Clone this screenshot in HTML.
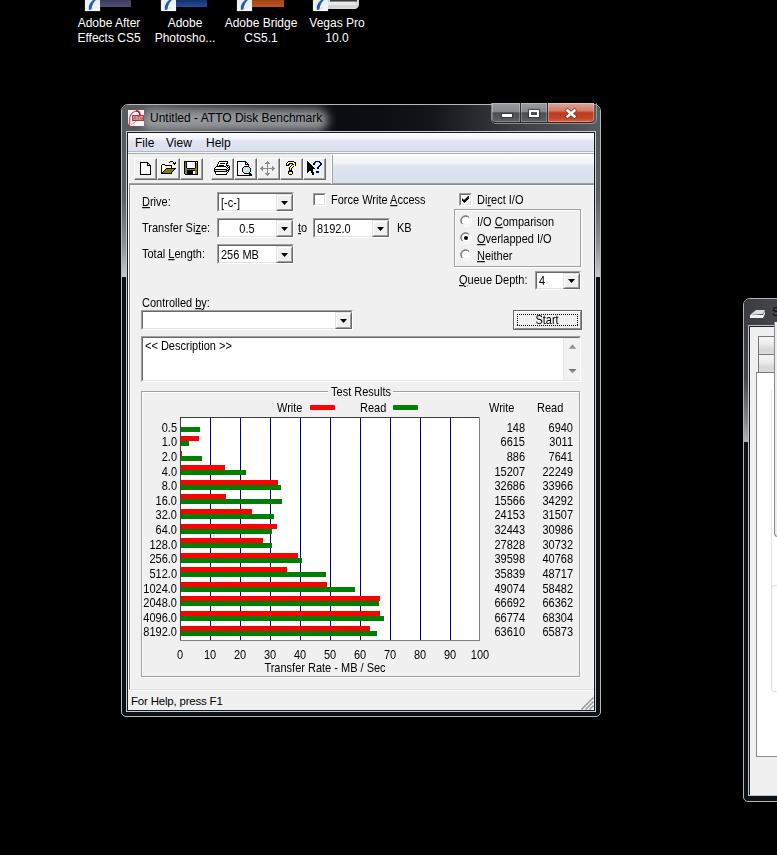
<!DOCTYPE html><html><head><meta charset="utf-8"><style>
html,body{margin:0;padding:0;background:#000;}
body{width:777px;height:855px;position:relative;overflow:hidden;font-family:"Liberation Sans", sans-serif;}
div{box-sizing:content-box}
</style></head><body>
<div style="position:absolute;left:85px;top:0;width:15px;height:11px;background:linear-gradient(180deg,#e4eef2,#f6f8f4);box-shadow:0 0 1px rgba(255,255,255,0.5)"></div>
<svg style="position:absolute;left:85px;top:0" width="15" height="11"><path d="M4 10C3 6 5 2 9.5 -1L12 -1C8.5 2 7 5 6.5 9.5z" fill="#2a5aa8"/><path d="M6.5 9.5C7.5 8 9 7.5 10.5 8" stroke="#c8d8e8" stroke-width="0.8" fill="none"/></svg>
<div style="position:absolute;left:100px;top:0px;width:31px;height:7px;background:linear-gradient(180deg,#3c3c5c,#50507a)"></div>
<div style="position:absolute;left:161px;top:0;width:15px;height:11px;background:linear-gradient(180deg,#e4eef2,#f6f8f4);box-shadow:0 0 1px rgba(255,255,255,0.5)"></div>
<svg style="position:absolute;left:161px;top:0" width="15" height="11"><path d="M4 10C3 6 5 2 9.5 -1L12 -1C8.5 2 7 5 6.5 9.5z" fill="#2a5aa8"/><path d="M6.5 9.5C7.5 8 9 7.5 10.5 8" stroke="#c8d8e8" stroke-width="0.8" fill="none"/></svg>
<div style="position:absolute;left:176px;top:0px;width:31px;height:7px;background:linear-gradient(180deg,#15306a,#2050a0)"></div>
<div style="position:absolute;left:237px;top:0;width:15px;height:11px;background:linear-gradient(180deg,#e4eef2,#f6f8f4);box-shadow:0 0 1px rgba(255,255,255,0.5)"></div>
<svg style="position:absolute;left:237px;top:0" width="15" height="11"><path d="M4 10C3 6 5 2 9.5 -1L12 -1C8.5 2 7 5 6.5 9.5z" fill="#2a5aa8"/><path d="M6.5 9.5C7.5 8 9 7.5 10.5 8" stroke="#c8d8e8" stroke-width="0.8" fill="none"/></svg>
<div style="position:absolute;left:252px;top:0px;width:32px;height:7px;background:linear-gradient(180deg,#a04418,#c0561e)"></div>
<div style="position:absolute;left:313px;top:0;width:15px;height:11px;background:linear-gradient(180deg,#e4eef2,#f6f8f4);box-shadow:0 0 1px rgba(255,255,255,0.5)"></div>
<svg style="position:absolute;left:313px;top:0" width="15" height="11"><path d="M4 10C3 6 5 2 9.5 -1L12 -1C8.5 2 7 5 6.5 9.5z" fill="#2a5aa8"/><path d="M6.5 9.5C7.5 8 9 7.5 10.5 8" stroke="#c8d8e8" stroke-width="0.8" fill="none"/></svg>
<svg style="position:absolute;left:328px;top:0" width="32" height="10"><path d="M0 0H31V4C31 7.5 29 9 26 9H0z" fill="#d4d4d4"/><path d="M0 2H26C27.5 2 28 3 28 4V5H0z" fill="#e8e8e8"/><path d="M2 0H29V1.5H2z" fill="#3a3a3a"/></svg>
<div style="position:absolute;top:16.84px;line-height:12px;font-size:12px;color:#fff;white-space:pre;font-family:'Liberation Sans', sans-serif;text-shadow:0 1px 2px rgba(0,0,0,0.9);left:-91px;width:400px;text-align:center">Adobe After</div>
<div style="position:absolute;top:31.84px;line-height:12px;font-size:12px;color:#fff;white-space:pre;font-family:'Liberation Sans', sans-serif;text-shadow:0 1px 2px rgba(0,0,0,0.9);left:-91px;width:400px;text-align:center">Effects CS5</div>
<div style="position:absolute;top:16.84px;line-height:12px;font-size:12px;color:#fff;white-space:pre;font-family:'Liberation Sans', sans-serif;text-shadow:0 1px 2px rgba(0,0,0,0.9);left:-15px;width:400px;text-align:center">Adobe</div>
<div style="position:absolute;top:31.84px;line-height:12px;font-size:12px;color:#fff;white-space:pre;font-family:'Liberation Sans', sans-serif;text-shadow:0 1px 2px rgba(0,0,0,0.9);left:-15px;width:400px;text-align:center">Photosho...</div>
<div style="position:absolute;top:16.84px;line-height:12px;font-size:12px;color:#fff;white-space:pre;font-family:'Liberation Sans', sans-serif;text-shadow:0 1px 2px rgba(0,0,0,0.9);left:61px;width:400px;text-align:center">Adobe Bridge</div>
<div style="position:absolute;top:31.84px;line-height:12px;font-size:12px;color:#fff;white-space:pre;font-family:'Liberation Sans', sans-serif;text-shadow:0 1px 2px rgba(0,0,0,0.9);left:61px;width:400px;text-align:center">CS5.1</div>
<div style="position:absolute;top:16.84px;line-height:12px;font-size:12px;color:#fff;white-space:pre;font-family:'Liberation Sans', sans-serif;text-shadow:0 1px 2px rgba(0,0,0,0.9);left:137px;width:400px;text-align:center">Vegas Pro</div>
<div style="position:absolute;top:31.84px;line-height:12px;font-size:12px;color:#fff;white-space:pre;font-family:'Liberation Sans', sans-serif;text-shadow:0 1px 2px rgba(0,0,0,0.9);left:137px;width:400px;text-align:center">10.0</div>
<div style="position:absolute;left:121px;top:104px;width:478px;height:611px;border:1px solid #b4b8bc;border-radius:7px 7px 5px 5px;background:#0e1114;overflow:hidden">
<div style="position:absolute;left:0;top:0;width:478px;height:28px;background:linear-gradient(90deg,#5a5d60 0px,#55585b 20px,#3a3d40 60px,#15181c 180px,#0a0d12 215px,#0b0e13 260px,#121519 310px,#2a2d31 360px,#3e4145 400px,#505357 460px,#585b5f 478px)"></div>
<div style="position:absolute;left:20px;top:4px;width:186px;height:22px;border-radius:11px;background:rgba(160,163,166,0.9);filter:blur(5px)"></div>
<div style="position:absolute;left:0;top:28px;width:5px;height:144px;background:linear-gradient(180deg,#56595c 0%,#5c5f62 45%,#8e9194 78%,#bcbfc1 96%,#c6c8ca 100%)"></div>
<div style="position:absolute;right:0;top:28px;width:5px;height:144px;background:linear-gradient(180deg,#56595c 0%,#5c5f62 45%,#8e9194 78%,#bcbfc1 96%,#c6c8ca 100%)"></div>
</div>
<svg style="position:absolute;left:128px;top:110px" width="16" height="16"><rect x="0" y="0" width="16" height="16" fill="#fbf2f2"/><path d="M11.5 5C12 1.5 9 0.5 6.5 1.5C3 3 1.5 7 1.5 10.5C1.5 13 2 14.5 1 15.5" stroke="#d0506a" stroke-width="1.3" fill="none"/><path d="M8 1C10.5 0.5 12 2 11.8 5" stroke="#a01830" stroke-width="1.5" fill="none"/><path d="M0 13C0.5 15 1.5 16 3.5 16H0z" fill="#b02038"/><path d="M3 14.5C5 14 7 12.5 8 11" stroke="#e08090" stroke-width="0.9" fill="none"/><rect x="4" y="5" width="12" height="6" fill="#b83848"/><rect x="5" y="6" width="10" height="4" fill="#c9a294"/><path d="M6 9.5L7 6.5 8 9.5M9 6.5h3M10.5 6.5v3M12.5 7.5a1 1 0 1 0 2 0v1a1 1 0 1 1-2 0z" stroke="#9a5050" stroke-width="0.6" fill="none"/></svg>
<div style="position:absolute;top:111.84px;line-height:12px;font-size:12px;color:#000;white-space:pre;font-family:'Liberation Sans', sans-serif;;left:150px">Untitled - ATTO Disk Benchmark</div>
<div style="position:absolute;left:491px;top:103px;width:104px;height:20px;border:1px solid rgba(200,204,208,0.55);border-top:none;border-radius:0 0 5px 5px"></div>
<div style="position:absolute;left:492px;top:103px;width:28px;height:19px;border-right:1px solid #2a2d30;border-bottom:1px solid #2a2d30;border-radius:0 0 0 4px;background:linear-gradient(180deg,#9a9ea3 0%,#84888d 45%,#4a4e53 52%,#5e6267 100%);box-shadow:inset 0 0 0 1px rgba(255,255,255,0.25)"></div>
<div style="position:absolute;left:521px;top:103px;width:26px;height:19px;border-right:1px solid #2a2d30;border-bottom:1px solid #2a2d30;background:linear-gradient(180deg,#9a9ea3 0%,#84888d 45%,#4a4e53 52%,#5e6267 100%);box-shadow:inset 0 0 0 1px rgba(255,255,255,0.25)"></div>
<div style="position:absolute;left:548px;top:103px;width:46px;height:19px;border-bottom:1px solid #4a1a10;border-radius:0 0 4px 0;background:linear-gradient(180deg,#dba79a 0%,#cf7e6a 40%,#bd3a1e 52%,#c44428 80%,#d2664a 100%);box-shadow:inset 0 0 0 1px rgba(255,255,255,0.3)"></div>
<div style="position:absolute;left:502px;top:114px;width:10px;height:3px;background:#fff;box-shadow:0 0 1px 1px rgba(40,40,40,0.6)"></div>
<div style="position:absolute;left:529px;top:110px;width:6px;height:3px;border:2px solid #fff;border-top-width:2px;box-shadow:0 0 1px 1px rgba(40,40,40,0.6), inset 0 0 1px rgba(40,40,40,0.6)"></div>
<svg style="position:absolute;left:563px;top:107px" width="16" height="13"><path d="M4.5 3.5L11.5 9.5M11.5 3.5L4.5 9.5" stroke="#5a1a10" stroke-width="4.2" stroke-opacity="0.55" stroke-linecap="square"/><path d="M4.5 3.5L11.5 9.5M11.5 3.5L4.5 9.5" stroke="#fff" stroke-width="2.6" stroke-linecap="square"/></svg>
<div style="position:absolute;left:126px;top:131px;width:468px;height:579px;border:1px solid #c9ccd0;"></div>
<div style="position:absolute;left:127px;top:132px;width:466px;height:577px;border:1px solid #16191d;"></div>
<div style="position:absolute;left:128px;top:133px;width:466px;height:577px;background:#f0f0f0"></div>
<div style="position:absolute;left:128px;top:133px;width:466px;height:18px;background:linear-gradient(180deg,#fbfcfe 0%,#f1f3f8 30%,#dfe4f0 45%,#dae0ee 100%)"></div>
<div style="position:absolute;left:128px;top:151px;width:466px;height:1px;background:#b4b9c4"></div>
<div style="position:absolute;left:128px;top:152px;width:466px;height:1px;background:#f6f7fb"></div>
<div style="position:absolute;left:128px;top:153px;width:466px;height:1px;background:#a8aca8"></div>
<div style="position:absolute;top:136.84px;line-height:12px;font-size:12px;color:#000;white-space:pre;font-family:'Liberation Sans', sans-serif;;left:135px">File</div>
<div style="position:absolute;top:136.84px;line-height:12px;font-size:12px;color:#000;white-space:pre;font-family:'Liberation Sans', sans-serif;;left:166px">View</div>
<div style="position:absolute;top:136.84px;line-height:12px;font-size:12px;color:#000;white-space:pre;font-family:'Liberation Sans', sans-serif;;left:206px">Help</div>
<div style="position:absolute;left:128px;top:154px;width:466px;height:29px;background:linear-gradient(180deg,#fbfcfe 0%,#f1f3f8 30%,#dfe4f0 42%,#d8dfee 100%)"></div>
<div style="position:absolute;left:128px;top:183px;width:466px;height:1px;background:#a0a0a0"></div>
<div style="position:absolute;left:128px;top:154px;width:204px;height:29px;background:#f0f0f0"></div>
<div style="position:absolute;left:134px;top:158px;width:21px;height:20px;border-style:solid;border-width:1px;border-color:#fff #696969 #696969 #fff;box-shadow:inset -1px -1px 0 #a0a0a0;background:#f0f0f0"></div>
<svg style="position:absolute;left:136px;top:161px" width="18" height="14" shape-rendering="crispEdges"><rect x="4" y="1" width="8" height="1" fill="#000000"/><rect x="4" y="2" width="1" height="1" fill="#000000"/><rect x="5" y="2" width="6" height="1" fill="#ffffff"/><rect x="11" y="2" width="2" height="1" fill="#000000"/><rect x="4" y="3" width="1" height="1" fill="#000000"/><rect x="5" y="3" width="6" height="1" fill="#ffffff"/><rect x="11" y="3" width="1" height="1" fill="#000000"/><rect x="12" y="3" width="1" height="1" fill="#ffffff"/><rect x="13" y="3" width="1" height="1" fill="#000000"/><rect x="4" y="4" width="1" height="1" fill="#000000"/><rect x="5" y="4" width="6" height="1" fill="#ffffff"/><rect x="11" y="4" width="4" height="1" fill="#000000"/><rect x="4" y="5" width="1" height="1" fill="#000000"/><rect x="5" y="5" width="9" height="1" fill="#ffffff"/><rect x="14" y="5" width="1" height="1" fill="#000000"/><rect x="4" y="6" width="1" height="1" fill="#000000"/><rect x="5" y="6" width="9" height="1" fill="#ffffff"/><rect x="14" y="6" width="1" height="1" fill="#000000"/><rect x="4" y="7" width="1" height="1" fill="#000000"/><rect x="5" y="7" width="9" height="1" fill="#ffffff"/><rect x="14" y="7" width="1" height="1" fill="#000000"/><rect x="4" y="8" width="1" height="1" fill="#000000"/><rect x="5" y="8" width="9" height="1" fill="#ffffff"/><rect x="14" y="8" width="1" height="1" fill="#000000"/><rect x="4" y="9" width="1" height="1" fill="#000000"/><rect x="5" y="9" width="9" height="1" fill="#ffffff"/><rect x="14" y="9" width="1" height="1" fill="#000000"/><rect x="4" y="10" width="1" height="1" fill="#000000"/><rect x="5" y="10" width="9" height="1" fill="#ffffff"/><rect x="14" y="10" width="1" height="1" fill="#000000"/><rect x="4" y="11" width="1" height="1" fill="#000000"/><rect x="5" y="11" width="9" height="1" fill="#ffffff"/><rect x="14" y="11" width="1" height="1" fill="#000000"/><rect x="4" y="12" width="1" height="1" fill="#000000"/><rect x="5" y="12" width="9" height="1" fill="#ffffff"/><rect x="14" y="12" width="1" height="1" fill="#000000"/><rect x="4" y="13" width="11" height="1" fill="#000000"/></svg>
<div style="position:absolute;left:157px;top:158px;width:21px;height:20px;border-style:solid;border-width:1px;border-color:#fff #696969 #696969 #fff;box-shadow:inset -1px -1px 0 #a0a0a0;background:#f0f0f0"></div>
<svg style="position:absolute;left:159px;top:161px" width="18" height="13" shape-rendering="crispEdges"><rect x="11" y="0" width="3" height="1" fill="#000000"/><rect x="10" y="1" width="1" height="1" fill="#000000"/><rect x="14" y="1" width="1" height="1" fill="#000000"/><rect x="16" y="1" width="1" height="1" fill="#000000"/><rect x="14" y="2" width="3" height="1" fill="#000000"/><rect x="3" y="3" width="3" height="1" fill="#000000"/><rect x="15" y="3" width="1" height="1" fill="#000000"/><rect x="2" y="4" width="1" height="1" fill="#000000"/><rect x="3" y="4" width="3" height="1" fill="#ffff80"/><rect x="6" y="4" width="7" height="1" fill="#000000"/><rect x="2" y="5" width="1" height="1" fill="#000000"/><rect x="3" y="5" width="1" height="1" fill="#ffff80"/><rect x="4" y="5" width="1" height="1" fill="#ffffff"/><rect x="5" y="5" width="1" height="1" fill="#ffff80"/><rect x="6" y="5" width="1" height="1" fill="#ffffff"/><rect x="7" y="5" width="1" height="1" fill="#ffff80"/><rect x="8" y="5" width="1" height="1" fill="#ffffff"/><rect x="9" y="5" width="1" height="1" fill="#ffff80"/><rect x="10" y="5" width="1" height="1" fill="#ffffff"/><rect x="11" y="5" width="1" height="1" fill="#ffff80"/><rect x="12" y="5" width="1" height="1" fill="#000000"/><rect x="2" y="6" width="1" height="1" fill="#000000"/><rect x="3" y="6" width="1" height="1" fill="#ffffff"/><rect x="4" y="6" width="1" height="1" fill="#ffff80"/><rect x="5" y="6" width="1" height="1" fill="#ffffff"/><rect x="6" y="6" width="1" height="1" fill="#ffff80"/><rect x="7" y="6" width="1" height="1" fill="#ffffff"/><rect x="8" y="6" width="1" height="1" fill="#ffff80"/><rect x="9" y="6" width="1" height="1" fill="#ffffff"/><rect x="10" y="6" width="1" height="1" fill="#ffff80"/><rect x="11" y="6" width="1" height="1" fill="#ffffff"/><rect x="12" y="6" width="1" height="1" fill="#000000"/><rect x="2" y="7" width="1" height="1" fill="#000000"/><rect x="3" y="7" width="1" height="1" fill="#ffff80"/><rect x="4" y="7" width="1" height="1" fill="#ffffff"/><rect x="5" y="7" width="1" height="1" fill="#ffff80"/><rect x="6" y="7" width="1" height="1" fill="#ffffff"/><rect x="7" y="7" width="10" height="1" fill="#000000"/><rect x="2" y="8" width="1" height="1" fill="#000000"/><rect x="3" y="8" width="1" height="1" fill="#ffffff"/><rect x="4" y="8" width="1" height="1" fill="#ffff80"/><rect x="5" y="8" width="1" height="1" fill="#ffffff"/><rect x="6" y="8" width="1" height="1" fill="#000000"/><rect x="7" y="8" width="8" height="1" fill="#808000"/><rect x="15" y="8" width="1" height="1" fill="#000000"/><rect x="2" y="9" width="1" height="1" fill="#000000"/><rect x="3" y="9" width="1" height="1" fill="#ffff80"/><rect x="4" y="9" width="1" height="1" fill="#ffffff"/><rect x="5" y="9" width="1" height="1" fill="#000000"/><rect x="6" y="9" width="8" height="1" fill="#808000"/><rect x="14" y="9" width="1" height="1" fill="#000000"/><rect x="2" y="10" width="1" height="1" fill="#000000"/><rect x="3" y="10" width="1" height="1" fill="#ffffff"/><rect x="4" y="10" width="1" height="1" fill="#000000"/><rect x="5" y="10" width="8" height="1" fill="#808000"/><rect x="13" y="10" width="1" height="1" fill="#000000"/><rect x="2" y="11" width="2" height="1" fill="#000000"/><rect x="4" y="11" width="8" height="1" fill="#808000"/><rect x="12" y="11" width="1" height="1" fill="#000000"/><rect x="2" y="12" width="11" height="1" fill="#000000"/></svg>
<div style="position:absolute;left:180px;top:158px;width:21px;height:20px;border-style:solid;border-width:1px;border-color:#fff #696969 #696969 #fff;box-shadow:inset -1px -1px 0 #a0a0a0;background:#f0f0f0"></div>
<svg style="position:absolute;left:182px;top:161px" width="18" height="14" shape-rendering="crispEdges"><rect x="2" y="0" width="14" height="1" fill="#000000"/><rect x="2" y="1" width="1" height="1" fill="#000000"/><rect x="3" y="1" width="1" height="1" fill="#808000"/><rect x="4" y="1" width="1" height="1" fill="#000000"/><rect x="5" y="1" width="8" height="1" fill="#ffffff"/><rect x="13" y="1" width="1" height="1" fill="#000000"/><rect x="14" y="1" width="1" height="1" fill="#ffffff"/><rect x="15" y="1" width="1" height="1" fill="#000000"/><rect x="2" y="2" width="1" height="1" fill="#000000"/><rect x="3" y="2" width="1" height="1" fill="#808000"/><rect x="4" y="2" width="1" height="1" fill="#000000"/><rect x="5" y="2" width="8" height="1" fill="#ffffff"/><rect x="13" y="2" width="1" height="1" fill="#000000"/><rect x="14" y="2" width="1" height="1" fill="#808000"/><rect x="15" y="2" width="1" height="1" fill="#000000"/><rect x="2" y="3" width="1" height="1" fill="#000000"/><rect x="3" y="3" width="1" height="1" fill="#808000"/><rect x="4" y="3" width="1" height="1" fill="#000000"/><rect x="5" y="3" width="8" height="1" fill="#ffffff"/><rect x="13" y="3" width="1" height="1" fill="#000000"/><rect x="14" y="3" width="1" height="1" fill="#808000"/><rect x="15" y="3" width="1" height="1" fill="#000000"/><rect x="2" y="4" width="1" height="1" fill="#000000"/><rect x="3" y="4" width="1" height="1" fill="#808000"/><rect x="4" y="4" width="1" height="1" fill="#000000"/><rect x="5" y="4" width="8" height="1" fill="#ffffff"/><rect x="13" y="4" width="1" height="1" fill="#000000"/><rect x="14" y="4" width="1" height="1" fill="#808000"/><rect x="15" y="4" width="1" height="1" fill="#000000"/><rect x="2" y="5" width="1" height="1" fill="#000000"/><rect x="3" y="5" width="1" height="1" fill="#808000"/><rect x="4" y="5" width="1" height="1" fill="#000000"/><rect x="5" y="5" width="8" height="1" fill="#ffffff"/><rect x="13" y="5" width="1" height="1" fill="#000000"/><rect x="14" y="5" width="1" height="1" fill="#808000"/><rect x="15" y="5" width="1" height="1" fill="#000000"/><rect x="2" y="6" width="1" height="1" fill="#000000"/><rect x="3" y="6" width="1" height="1" fill="#808000"/><rect x="4" y="6" width="1" height="1" fill="#000000"/><rect x="5" y="6" width="8" height="1" fill="#ffffff"/><rect x="13" y="6" width="1" height="1" fill="#000000"/><rect x="14" y="6" width="1" height="1" fill="#808000"/><rect x="15" y="6" width="1" height="1" fill="#000000"/><rect x="2" y="7" width="1" height="1" fill="#000000"/><rect x="3" y="7" width="2" height="1" fill="#808000"/><rect x="5" y="7" width="8" height="1" fill="#000000"/><rect x="13" y="7" width="2" height="1" fill="#808000"/><rect x="15" y="7" width="1" height="1" fill="#000000"/><rect x="2" y="8" width="1" height="1" fill="#000000"/><rect x="3" y="8" width="12" height="1" fill="#808000"/><rect x="15" y="8" width="1" height="1" fill="#000000"/><rect x="2" y="9" width="1" height="1" fill="#000000"/><rect x="3" y="9" width="2" height="1" fill="#808000"/><rect x="5" y="9" width="8" height="1" fill="#000000"/><rect x="13" y="9" width="2" height="1" fill="#808000"/><rect x="15" y="9" width="1" height="1" fill="#000000"/><rect x="2" y="10" width="1" height="1" fill="#000000"/><rect x="3" y="10" width="2" height="1" fill="#808000"/><rect x="5" y="10" width="6" height="1" fill="#000000"/><rect x="11" y="10" width="2" height="1" fill="#ffffff"/><rect x="13" y="10" width="2" height="1" fill="#808000"/><rect x="15" y="10" width="1" height="1" fill="#000000"/><rect x="2" y="11" width="1" height="1" fill="#000000"/><rect x="3" y="11" width="2" height="1" fill="#808000"/><rect x="5" y="11" width="6" height="1" fill="#000000"/><rect x="11" y="11" width="2" height="1" fill="#ffffff"/><rect x="13" y="11" width="2" height="1" fill="#808000"/><rect x="15" y="11" width="1" height="1" fill="#000000"/><rect x="2" y="12" width="1" height="1" fill="#000000"/><rect x="3" y="12" width="2" height="1" fill="#808000"/><rect x="5" y="12" width="6" height="1" fill="#000000"/><rect x="11" y="12" width="2" height="1" fill="#ffffff"/><rect x="13" y="12" width="2" height="1" fill="#808000"/><rect x="15" y="12" width="1" height="1" fill="#000000"/><rect x="3" y="13" width="13" height="1" fill="#000000"/></svg>
<div style="position:absolute;left:211px;top:158px;width:21px;height:20px;border-style:solid;border-width:1px;border-color:#fff #696969 #696969 #fff;box-shadow:inset -1px -1px 0 #a0a0a0;background:#f0f0f0"></div>
<svg style="position:absolute;left:213px;top:161px" width="18" height="14" shape-rendering="crispEdges"><rect x="6" y="0" width="9" height="1" fill="#000000"/><rect x="5" y="1" width="1" height="1" fill="#000000"/><rect x="6" y="1" width="8" height="1" fill="#ffffff"/><rect x="14" y="1" width="1" height="1" fill="#000000"/><rect x="5" y="2" width="1" height="1" fill="#000000"/><rect x="6" y="2" width="1" height="1" fill="#ffffff"/><rect x="7" y="2" width="5" height="1" fill="#000000"/><rect x="12" y="2" width="1" height="1" fill="#ffffff"/><rect x="13" y="2" width="2" height="1" fill="#000000"/><rect x="4" y="3" width="1" height="1" fill="#000000"/><rect x="5" y="3" width="8" height="1" fill="#ffffff"/><rect x="13" y="3" width="1" height="1" fill="#000000"/><rect x="4" y="4" width="1" height="1" fill="#000000"/><rect x="5" y="4" width="1" height="1" fill="#ffffff"/><rect x="6" y="4" width="5" height="1" fill="#000000"/><rect x="11" y="4" width="2" height="1" fill="#ffffff"/><rect x="13" y="4" width="3" height="1" fill="#000000"/><rect x="3" y="5" width="10" height="1" fill="#000000"/><rect x="13" y="5" width="1" height="1" fill="#ffffff"/><rect x="14" y="5" width="1" height="1" fill="#000000"/><rect x="15" y="5" width="1" height="1" fill="#ffffff"/><rect x="16" y="5" width="1" height="1" fill="#000000"/><rect x="2" y="6" width="1" height="1" fill="#000000"/><rect x="3" y="6" width="10" height="1" fill="#ffffff"/><rect x="13" y="6" width="1" height="1" fill="#000000"/><rect x="14" y="6" width="1" height="1" fill="#ffffff"/><rect x="15" y="6" width="2" height="1" fill="#000000"/><rect x="1" y="7" width="1" height="1" fill="#000000"/><rect x="2" y="7" width="12" height="1" fill="#ffffff"/><rect x="14" y="7" width="1" height="1" fill="#000000"/><rect x="15" y="7" width="1" height="1" fill="#ffffff"/><rect x="16" y="7" width="1" height="1" fill="#000000"/><rect x="1" y="8" width="13" height="1" fill="#000000"/><rect x="14" y="8" width="1" height="1" fill="#ffffff"/><rect x="15" y="8" width="2" height="1" fill="#000000"/><rect x="1" y="9" width="1" height="1" fill="#000000"/><rect x="2" y="9" width="11" height="1" fill="#e0e8b0"/><rect x="13" y="9" width="3" height="1" fill="#000000"/><rect x="1" y="10" width="13" height="1" fill="#000000"/><rect x="14" y="10" width="1" height="1" fill="#ffffff"/><rect x="15" y="10" width="1" height="1" fill="#000000"/><rect x="2" y="11" width="1" height="1" fill="#000000"/><rect x="3" y="11" width="11" height="1" fill="#ffffff"/><rect x="14" y="11" width="1" height="1" fill="#000000"/><rect x="2" y="12" width="1" height="1" fill="#000000"/><rect x="3" y="12" width="10" height="1" fill="#ffffff"/><rect x="13" y="12" width="1" height="1" fill="#000000"/><rect x="3" y="13" width="11" height="1" fill="#000000"/></svg>
<div style="position:absolute;left:234px;top:158px;width:21px;height:20px;border-style:solid;border-width:1px;border-color:#fff #696969 #696969 #fff;box-shadow:inset -1px -1px 0 #a0a0a0;background:#f0f0f0"></div>
<svg style="position:absolute;left:236px;top:161px" width="18" height="15" shape-rendering="crispEdges"><rect x="1" y="0" width="9" height="1" fill="#000000"/><rect x="1" y="1" width="1" height="1" fill="#000000"/><rect x="2" y="1" width="7" height="1" fill="#ffffff"/><rect x="9" y="1" width="2" height="1" fill="#000000"/><rect x="1" y="2" width="1" height="1" fill="#000000"/><rect x="2" y="2" width="7" height="1" fill="#ffffff"/><rect x="9" y="2" width="1" height="1" fill="#000000"/><rect x="10" y="2" width="1" height="1" fill="#ffffff"/><rect x="11" y="2" width="1" height="1" fill="#000000"/><rect x="1" y="3" width="1" height="1" fill="#000000"/><rect x="2" y="3" width="7" height="1" fill="#ffffff"/><rect x="9" y="3" width="4" height="1" fill="#000000"/><rect x="1" y="4" width="1" height="1" fill="#000000"/><rect x="2" y="4" width="10" height="1" fill="#ffffff"/><rect x="12" y="4" width="1" height="1" fill="#000000"/><rect x="1" y="5" width="1" height="1" fill="#000000"/><rect x="2" y="5" width="6" height="1" fill="#ffffff"/><rect x="8" y="5" width="5" height="1" fill="#000000"/><rect x="1" y="6" width="1" height="1" fill="#000000"/><rect x="2" y="6" width="5" height="1" fill="#ffffff"/><rect x="7" y="6" width="1" height="1" fill="#000000"/><rect x="8" y="6" width="5" height="1" fill="#c4e4e4"/><rect x="13" y="6" width="1" height="1" fill="#000000"/><rect x="1" y="7" width="1" height="1" fill="#000000"/><rect x="2" y="7" width="4" height="1" fill="#ffffff"/><rect x="6" y="7" width="1" height="1" fill="#000000"/><rect x="7" y="7" width="7" height="1" fill="#c4e4e4"/><rect x="14" y="7" width="1" height="1" fill="#000000"/><rect x="1" y="8" width="1" height="1" fill="#000000"/><rect x="2" y="8" width="4" height="1" fill="#ffffff"/><rect x="6" y="8" width="1" height="1" fill="#000000"/><rect x="7" y="8" width="3" height="1" fill="#c4e4e4"/><rect x="10" y="8" width="1" height="1" fill="#ffffff"/><rect x="11" y="8" width="3" height="1" fill="#c4e4e4"/><rect x="14" y="8" width="1" height="1" fill="#000000"/><rect x="1" y="9" width="1" height="1" fill="#000000"/><rect x="2" y="9" width="4" height="1" fill="#ffffff"/><rect x="6" y="9" width="1" height="1" fill="#000000"/><rect x="7" y="9" width="2" height="1" fill="#c4e4e4"/><rect x="9" y="9" width="1" height="1" fill="#ffffff"/><rect x="10" y="9" width="4" height="1" fill="#c4e4e4"/><rect x="14" y="9" width="1" height="1" fill="#000000"/><rect x="1" y="10" width="1" height="1" fill="#000000"/><rect x="2" y="10" width="4" height="1" fill="#ffffff"/><rect x="6" y="10" width="1" height="1" fill="#000000"/><rect x="7" y="10" width="7" height="1" fill="#c4e4e4"/><rect x="14" y="10" width="1" height="1" fill="#000000"/><rect x="1" y="11" width="1" height="1" fill="#000000"/><rect x="2" y="11" width="5" height="1" fill="#ffffff"/><rect x="7" y="11" width="1" height="1" fill="#000000"/><rect x="8" y="11" width="5" height="1" fill="#c4e4e4"/><rect x="13" y="11" width="1" height="1" fill="#000000"/><rect x="1" y="12" width="1" height="1" fill="#000000"/><rect x="2" y="12" width="6" height="1" fill="#ffffff"/><rect x="8" y="12" width="7" height="1" fill="#000000"/><rect x="1" y="13" width="1" height="1" fill="#000000"/><rect x="2" y="13" width="11" height="1" fill="#ffffff"/><rect x="13" y="13" width="3" height="1" fill="#000000"/><rect x="1" y="14" width="15" height="1" fill="#000000"/></svg>
<div style="position:absolute;left:257px;top:158px;width:21px;height:20px;border-style:solid;border-width:1px;border-color:#fff #696969 #696969 #fff;box-shadow:inset -1px -1px 0 #a0a0a0;background:#f0f0f0"></div>
<svg style="position:absolute;left:259px;top:161px" width="18" height="15" shape-rendering="crispEdges"><rect x="8" y="0" width="1" height="1" fill="#8c8c8c"/><rect x="7" y="1" width="3" height="1" fill="#8c8c8c"/><rect x="6" y="2" width="5" height="1" fill="#8c8c8c"/><rect x="8" y="3" width="1" height="1" fill="#8c8c8c"/><rect x="8" y="4" width="1" height="1" fill="#8c8c8c"/><rect x="3" y="5" width="1" height="1" fill="#8c8c8c"/><rect x="8" y="5" width="1" height="1" fill="#8c8c8c"/><rect x="13" y="5" width="1" height="1" fill="#8c8c8c"/><rect x="2" y="6" width="2" height="1" fill="#8c8c8c"/><rect x="8" y="6" width="1" height="1" fill="#8c8c8c"/><rect x="13" y="6" width="2" height="1" fill="#8c8c8c"/><rect x="1" y="7" width="15" height="1" fill="#8c8c8c"/><rect x="2" y="8" width="2" height="1" fill="#8c8c8c"/><rect x="8" y="8" width="1" height="1" fill="#8c8c8c"/><rect x="13" y="8" width="2" height="1" fill="#8c8c8c"/><rect x="3" y="9" width="1" height="1" fill="#8c8c8c"/><rect x="8" y="9" width="1" height="1" fill="#8c8c8c"/><rect x="13" y="9" width="1" height="1" fill="#8c8c8c"/><rect x="8" y="10" width="1" height="1" fill="#8c8c8c"/><rect x="8" y="11" width="1" height="1" fill="#8c8c8c"/><rect x="6" y="12" width="5" height="1" fill="#8c8c8c"/><rect x="7" y="13" width="3" height="1" fill="#8c8c8c"/><rect x="8" y="14" width="1" height="1" fill="#8c8c8c"/></svg>
<div style="position:absolute;left:280px;top:158px;width:21px;height:20px;border-style:solid;border-width:1px;border-color:#fff #696969 #696969 #fff;box-shadow:inset -1px -1px 0 #a0a0a0;background:#f0f0f0"></div>
<svg style="position:absolute;left:282px;top:161px" width="18" height="14" shape-rendering="crispEdges"><rect x="6" y="0" width="6" height="1" fill="#000000"/><rect x="5" y="1" width="1" height="1" fill="#000000"/><rect x="6" y="1" width="6" height="1" fill="#ffff80"/><rect x="12" y="1" width="2" height="1" fill="#000000"/><rect x="4" y="2" width="1" height="1" fill="#000000"/><rect x="5" y="2" width="2" height="1" fill="#ffff80"/><rect x="7" y="2" width="4" height="1" fill="#000000"/><rect x="11" y="2" width="2" height="1" fill="#ffff80"/><rect x="13" y="2" width="1" height="1" fill="#000000"/><rect x="4" y="3" width="1" height="1" fill="#000000"/><rect x="5" y="3" width="1" height="1" fill="#ffff80"/><rect x="6" y="3" width="2" height="1" fill="#000000"/><rect x="10" y="3" width="2" height="1" fill="#000000"/><rect x="12" y="3" width="1" height="1" fill="#ffff80"/><rect x="13" y="3" width="1" height="1" fill="#000000"/><rect x="4" y="4" width="3" height="1" fill="#000000"/><rect x="9" y="4" width="1" height="1" fill="#000000"/><rect x="10" y="4" width="3" height="1" fill="#ffff80"/><rect x="13" y="4" width="1" height="1" fill="#000000"/><rect x="8" y="5" width="1" height="1" fill="#000000"/><rect x="9" y="5" width="2" height="1" fill="#ffff80"/><rect x="11" y="5" width="1" height="1" fill="#000000"/><rect x="7" y="6" width="1" height="1" fill="#000000"/><rect x="8" y="6" width="2" height="1" fill="#ffff80"/><rect x="10" y="6" width="1" height="1" fill="#000000"/><rect x="7" y="7" width="1" height="1" fill="#000000"/><rect x="8" y="7" width="1" height="1" fill="#ffff80"/><rect x="9" y="7" width="1" height="1" fill="#000000"/><rect x="7" y="8" width="1" height="1" fill="#000000"/><rect x="8" y="8" width="1" height="1" fill="#ffff80"/><rect x="9" y="8" width="1" height="1" fill="#000000"/><rect x="7" y="9" width="3" height="1" fill="#000000"/><rect x="6" y="10" width="5" height="1" fill="#000000"/><rect x="6" y="11" width="1" height="1" fill="#000000"/><rect x="7" y="11" width="3" height="1" fill="#ffff80"/><rect x="10" y="11" width="1" height="1" fill="#000000"/><rect x="6" y="12" width="1" height="1" fill="#000000"/><rect x="7" y="12" width="3" height="1" fill="#ffff80"/><rect x="10" y="12" width="1" height="1" fill="#000000"/><rect x="7" y="13" width="3" height="1" fill="#000000"/></svg>
<div style="position:absolute;left:303px;top:158px;width:21px;height:20px;border-style:solid;border-width:1px;border-color:#fff #696969 #696969 #fff;box-shadow:inset -1px -1px 0 #a0a0a0;background:#f0f0f0"></div>
<svg style="position:absolute;left:305px;top:161px" width="18" height="14" shape-rendering="crispEdges"><rect x="2" y="0" width="1" height="1" fill="#000000"/><rect x="10" y="0" width="5" height="1" fill="#000080"/><rect x="2" y="1" width="2" height="1" fill="#000000"/><rect x="9" y="1" width="2" height="1" fill="#000080"/><rect x="14" y="1" width="2" height="1" fill="#000080"/><rect x="2" y="2" width="3" height="1" fill="#000000"/><rect x="8" y="2" width="2" height="1" fill="#000080"/><rect x="15" y="2" width="2" height="1" fill="#000080"/><rect x="2" y="3" width="4" height="1" fill="#000000"/><rect x="8" y="3" width="2" height="1" fill="#000080"/><rect x="15" y="3" width="2" height="1" fill="#000080"/><rect x="2" y="4" width="5" height="1" fill="#000000"/><rect x="14" y="4" width="2" height="1" fill="#000080"/><rect x="2" y="5" width="6" height="1" fill="#000000"/><rect x="13" y="5" width="2" height="1" fill="#000080"/><rect x="2" y="6" width="7" height="1" fill="#000000"/><rect x="12" y="6" width="2" height="1" fill="#000080"/><rect x="2" y="7" width="8" height="1" fill="#000000"/><rect x="12" y="7" width="2" height="1" fill="#000080"/><rect x="2" y="8" width="6" height="1" fill="#000000"/><rect x="2" y="9" width="6" height="1" fill="#000000"/><rect x="2" y="10" width="2" height="1" fill="#000000"/><rect x="6" y="10" width="2" height="1" fill="#000000"/><rect x="11" y="10" width="3" height="1" fill="#000080"/><rect x="2" y="11" width="1" height="1" fill="#000000"/><rect x="6" y="11" width="3" height="1" fill="#000000"/><rect x="11" y="11" width="3" height="1" fill="#000080"/><rect x="7" y="12" width="2" height="1" fill="#000000"/><rect x="7" y="13" width="2" height="1" fill="#000000"/></svg>
<div style="position:absolute;left:331px;top:155px;width:1px;height:29px;background:#fff"></div>
<div style="position:absolute;left:332px;top:155px;width:1px;height:29px;background:#a0a0a0"></div>
<div style="position:absolute;left:128px;top:154px;width:1px;height:535px;background:#fcfcfc"></div>
<div style="position:absolute;left:129px;top:184px;width:465px;height:1px;background:#8c8c8c"></div>
<div style="position:absolute;left:130px;top:185px;width:464px;height:1px;background:#fafafa"></div>
<div style="position:absolute;left:129px;top:184px;width:1px;height:505px;background:#8c8c8c"></div>
<div style="position:absolute;left:130px;top:185px;width:1px;height:504px;background:#f8f8f8"></div>
<div style="position:absolute;left:130px;top:689px;width:464px;height:1px;background:#dedede"></div>
<div style="position:absolute;left:128px;top:690px;width:466px;height:1px;background:#fafafa"></div>
<div style="position:absolute;top:196.69px;line-height:11px;font-size:11px;color:#000;white-space:pre;font-family:'Liberation Sans', sans-serif;transform:scaleY(1.12);transform-origin:0 9.31px;;left:142px"><u>D</u>rive:</div>
<div style="position:absolute;top:222.69px;line-height:11px;font-size:11px;color:#000;white-space:pre;font-family:'Liberation Sans', sans-serif;transform:scaleY(1.12);transform-origin:0 9.31px;;left:142px">Transfer Si<u>z</u>e:</div>
<div style="position:absolute;top:248.69px;line-height:11px;font-size:11px;color:#000;white-space:pre;font-family:'Liberation Sans', sans-serif;transform:scaleY(1.12);transform-origin:0 9.31px;;left:142px">Total <u>L</u>ength:</div>
<div style="position:absolute;left:217px;top:192px;width:75px;height:18px;border-style:solid;border-width:1px;border-color:#a0a0a0 #ffffff #ffffff #a0a0a0;background:#fff"><div style="position:absolute;left:0;top:0;width:73px;height:16px;border-style:solid;border-width:1px;border-color:#696969 #e3e3e3 #e3e3e3 #696969"></div></div>
<div style="position:absolute;left:276px;top:194px;width:15px;height:15px;border-style:solid;border-width:1px;border-color:#e3e3e3 #696969 #696969 #e3e3e3;background:#f0f0f0"><div style="position:absolute;left:0;top:0;width:13px;height:13px;border-style:solid;border-width:1px;border-color:#ffffff #a0a0a0 #a0a0a0 #ffffff"></div></div>
<svg style="position:absolute;left:281px;top:201px" width="7" height="4"><path d="M0 0h7L3.5 4z" fill="#000"/></svg>
<div style="position:absolute;top:197.69px;line-height:11px;font-size:11px;color:#000;white-space:pre;font-family:'Liberation Sans', sans-serif;transform:scaleY(1.12);transform-origin:0 9.31px;;left:221px">[-c-]</div>
<div style="position:absolute;left:217px;top:218px;width:75px;height:18px;border-style:solid;border-width:1px;border-color:#a0a0a0 #ffffff #ffffff #a0a0a0;background:#fff"><div style="position:absolute;left:0;top:0;width:73px;height:16px;border-style:solid;border-width:1px;border-color:#696969 #e3e3e3 #e3e3e3 #696969"></div></div>
<div style="position:absolute;left:276px;top:220px;width:15px;height:15px;border-style:solid;border-width:1px;border-color:#e3e3e3 #696969 #696969 #e3e3e3;background:#f0f0f0"><div style="position:absolute;left:0;top:0;width:13px;height:13px;border-style:solid;border-width:1px;border-color:#ffffff #a0a0a0 #a0a0a0 #ffffff"></div></div>
<svg style="position:absolute;left:281px;top:227px" width="7" height="4"><path d="M0 0h7L3.5 4z" fill="#000"/></svg>
<div style="position:absolute;top:223.69px;line-height:11px;font-size:11px;color:#000;white-space:pre;font-family:'Liberation Sans', sans-serif;transform:scaleY(1.12);transform-origin:0 9.31px;;left:47px;width:400px;text-align:center">0.5</div>
<div style="position:absolute;left:217px;top:244px;width:75px;height:18px;border-style:solid;border-width:1px;border-color:#a0a0a0 #ffffff #ffffff #a0a0a0;background:#fff"><div style="position:absolute;left:0;top:0;width:73px;height:16px;border-style:solid;border-width:1px;border-color:#696969 #e3e3e3 #e3e3e3 #696969"></div></div>
<div style="position:absolute;left:276px;top:246px;width:15px;height:15px;border-style:solid;border-width:1px;border-color:#e3e3e3 #696969 #696969 #e3e3e3;background:#f0f0f0"><div style="position:absolute;left:0;top:0;width:13px;height:13px;border-style:solid;border-width:1px;border-color:#ffffff #a0a0a0 #a0a0a0 #ffffff"></div></div>
<svg style="position:absolute;left:281px;top:253px" width="7" height="4"><path d="M0 0h7L3.5 4z" fill="#000"/></svg>
<div style="position:absolute;top:249.69px;line-height:11px;font-size:11px;color:#000;white-space:pre;font-family:'Liberation Sans', sans-serif;transform:scaleY(1.12);transform-origin:0 9.31px;;left:221px">256 MB</div>
<div style="position:absolute;top:222.69px;line-height:11px;font-size:11px;color:#000;white-space:pre;font-family:'Liberation Sans', sans-serif;transform:scaleY(1.12);transform-origin:0 9.31px;;left:298px"><u>t</u>o</div>
<div style="position:absolute;left:313px;top:218px;width:75px;height:18px;border-style:solid;border-width:1px;border-color:#a0a0a0 #ffffff #ffffff #a0a0a0;background:#fff"><div style="position:absolute;left:0;top:0;width:73px;height:16px;border-style:solid;border-width:1px;border-color:#696969 #e3e3e3 #e3e3e3 #696969"></div></div>
<div style="position:absolute;left:372px;top:220px;width:15px;height:15px;border-style:solid;border-width:1px;border-color:#e3e3e3 #696969 #696969 #e3e3e3;background:#f0f0f0"><div style="position:absolute;left:0;top:0;width:13px;height:13px;border-style:solid;border-width:1px;border-color:#ffffff #a0a0a0 #a0a0a0 #ffffff"></div></div>
<svg style="position:absolute;left:377px;top:227px" width="7" height="4"><path d="M0 0h7L3.5 4z" fill="#000"/></svg>
<div style="position:absolute;top:223.69px;line-height:11px;font-size:11px;color:#000;white-space:pre;font-family:'Liberation Sans', sans-serif;transform:scaleY(1.12);transform-origin:0 9.31px;;left:317px">8192.0</div>
<div style="position:absolute;top:222.69px;line-height:11px;font-size:11px;color:#000;white-space:pre;font-family:'Liberation Sans', sans-serif;transform:scaleY(1.12);transform-origin:0 9.31px;;left:397px">KB</div>
<div style="position:absolute;left:313px;top:193px;width:11px;height:11px;border-style:solid;border-width:1px;border-color:#a0a0a0 #ffffff #ffffff #a0a0a0;background:#fff"><div style="position:absolute;left:0;top:0;width:9px;height:9px;border-style:solid;border-width:1px;border-color:#696969 #e3e3e3 #e3e3e3 #696969"></div></div>
<div style="position:absolute;top:194.69px;line-height:11px;font-size:11px;color:#000;white-space:pre;font-family:'Liberation Sans', sans-serif;transform:scaleY(1.12);transform-origin:0 9.31px;;left:331px">Force Write <u>A</u>ccess</div>
<div style="position:absolute;left:459px;top:193px;width:11px;height:11px;border-style:solid;border-width:1px;border-color:#a0a0a0 #ffffff #ffffff #a0a0a0;background:#fff"><div style="position:absolute;left:0;top:0;width:9px;height:9px;border-style:solid;border-width:1px;border-color:#696969 #e3e3e3 #e3e3e3 #696969"></div></div>
<svg style="position:absolute;left:462px;top:196px" width="7" height="7"><path d="M0 2l2 2 5-5v2l-5 5-2-2z" fill="#000"/><path d="M0 2.5l2.5 2.5L7 0.5v2L2.5 7 0 4.5z" fill="#000"/></svg>
<div style="position:absolute;top:194.69px;line-height:11px;font-size:11px;color:#000;white-space:pre;font-family:'Liberation Sans', sans-serif;transform:scaleY(1.12);transform-origin:0 9.31px;;left:477px">Di<u>r</u>ect I/O</div>
<div style="position:absolute;left:454px;top:209px;width:125px;height:56px;border:1px solid #a0a0a0;box-shadow:1px 1px 0 #fff, inset 1px 1px 0 #fff"></div>
<svg style="position:absolute;left:460px;top:215px" width="12" height="12"><path d="M1.5 8.5A5 5 0 0 1 8.5 1.5" stroke="#a0a0a0" fill="none"/><path d="M2.5 9A4 4 0 0 1 9 2.5" stroke="#696969" fill="none"/><path d="M10.5 3.5A5 5 0 0 1 3.5 10.5" stroke="#fff" fill="none"/><circle cx="6" cy="6" r="3.6" fill="#fff"/></svg>
<div style="position:absolute;top:216.69px;line-height:11px;font-size:11px;color:#000;white-space:pre;font-family:'Liberation Sans', sans-serif;transform:scaleY(1.12);transform-origin:0 9.31px;;left:477px">I/O <u>C</u>omparison</div>
<svg style="position:absolute;left:460px;top:232px" width="12" height="12"><path d="M1.5 8.5A5 5 0 0 1 8.5 1.5" stroke="#a0a0a0" fill="none"/><path d="M2.5 9A4 4 0 0 1 9 2.5" stroke="#696969" fill="none"/><path d="M10.5 3.5A5 5 0 0 1 3.5 10.5" stroke="#fff" fill="none"/><circle cx="6" cy="6" r="3.6" fill="#fff"/><circle cx="6" cy="6" r="2" fill="#000"/></svg>
<div style="position:absolute;top:233.69px;line-height:11px;font-size:11px;color:#000;white-space:pre;font-family:'Liberation Sans', sans-serif;transform:scaleY(1.12);transform-origin:0 9.31px;;left:477px"><u>O</u>verlapped I/O</div>
<svg style="position:absolute;left:460px;top:249px" width="12" height="12"><path d="M1.5 8.5A5 5 0 0 1 8.5 1.5" stroke="#a0a0a0" fill="none"/><path d="M2.5 9A4 4 0 0 1 9 2.5" stroke="#696969" fill="none"/><path d="M10.5 3.5A5 5 0 0 1 3.5 10.5" stroke="#fff" fill="none"/><circle cx="6" cy="6" r="3.6" fill="#fff"/></svg>
<div style="position:absolute;top:250.69px;line-height:11px;font-size:11px;color:#000;white-space:pre;font-family:'Liberation Sans', sans-serif;transform:scaleY(1.12);transform-origin:0 9.31px;;left:477px"><u>N</u>either</div>
<div style="position:absolute;top:274.69px;line-height:11px;font-size:11px;color:#000;white-space:pre;font-family:'Liberation Sans', sans-serif;transform:scaleY(1.12);transform-origin:0 9.31px;;left:459px"><u>Q</u>ueue Depth:</div>
<div style="position:absolute;left:535px;top:271px;width:44px;height:17px;border-style:solid;border-width:1px;border-color:#a0a0a0 #ffffff #ffffff #a0a0a0;background:#fff"><div style="position:absolute;left:0;top:0;width:42px;height:15px;border-style:solid;border-width:1px;border-color:#696969 #e3e3e3 #e3e3e3 #696969"></div></div>
<div style="position:absolute;left:563px;top:273px;width:15px;height:14px;border-style:solid;border-width:1px;border-color:#e3e3e3 #696969 #696969 #e3e3e3;background:#f0f0f0"><div style="position:absolute;left:0;top:0;width:13px;height:12px;border-style:solid;border-width:1px;border-color:#ffffff #a0a0a0 #a0a0a0 #ffffff"></div></div>
<svg style="position:absolute;left:568px;top:279px" width="7" height="4"><path d="M0 0h7L3.5 4z" fill="#000"/></svg>
<div style="position:absolute;top:275.69px;line-height:11px;font-size:11px;color:#000;white-space:pre;font-family:'Liberation Sans', sans-serif;transform:scaleY(1.12);transform-origin:0 9.31px;;left:539px">4</div>
<div style="position:absolute;top:297.69px;line-height:11px;font-size:11px;color:#000;white-space:pre;font-family:'Liberation Sans', sans-serif;transform:scaleY(1.12);transform-origin:0 9.31px;;left:142px">Controlled <u>b</u>y:</div>
<div style="position:absolute;left:141px;top:310px;width:210px;height:18px;border-style:solid;border-width:1px;border-color:#a0a0a0 #ffffff #ffffff #a0a0a0;background:#fff"><div style="position:absolute;left:0;top:0;width:208px;height:16px;border-style:solid;border-width:1px;border-color:#696969 #e3e3e3 #e3e3e3 #696969"></div></div>
<div style="position:absolute;left:335px;top:312px;width:15px;height:15px;border-style:solid;border-width:1px;border-color:#e3e3e3 #696969 #696969 #e3e3e3;background:#f0f0f0"><div style="position:absolute;left:0;top:0;width:13px;height:13px;border-style:solid;border-width:1px;border-color:#ffffff #a0a0a0 #a0a0a0 #ffffff"></div></div>
<svg style="position:absolute;left:340px;top:319px" width="7" height="4"><path d="M0 0h7L3.5 4z" fill="#000"/></svg>
<div style="position:absolute;left:513px;top:310px;width:67px;height:18px;border:1px solid #696969;background:#f0f0f0"><div style="position:absolute;left:0;top:0;width:65px;height:16px;border-style:solid;border-width:1px;border-color:#fff #8c8c8c #8c8c8c #fff"></div></div>
<div style="position:absolute;left:517px;top:314px;width:61px;height:1px;background:repeating-linear-gradient(90deg,#000 0 1px,transparent 1px 2px)"></div>
<div style="position:absolute;left:517px;top:325px;width:61px;height:1px;background:repeating-linear-gradient(90deg,#000 0 1px,transparent 1px 2px)"></div>
<div style="position:absolute;left:517px;top:314px;width:1px;height:12px;background:repeating-linear-gradient(180deg,#000 0 1px,transparent 1px 2px)"></div>
<div style="position:absolute;left:577px;top:314px;width:1px;height:12px;background:repeating-linear-gradient(180deg,#000 0 1px,transparent 1px 2px)"></div>
<div style="position:absolute;top:314.69px;line-height:11px;font-size:11px;color:#000;white-space:pre;font-family:'Liberation Sans', sans-serif;transform:scaleY(1.12);transform-origin:0 9.31px;;left:347px;width:400px;text-align:center">Start</div>
<div style="position:absolute;left:141px;top:336px;width:438px;height:44px;border-style:solid;border-width:1px;border-color:#a0a0a0 #ffffff #ffffff #a0a0a0;background:#fff"><div style="position:absolute;left:0;top:0;width:436px;height:42px;border-style:solid;border-width:1px;border-color:#696969 #e3e3e3 #e3e3e3 #696969"></div></div>
<div style="position:absolute;top:340.69px;line-height:11px;font-size:11px;color:#000;white-space:pre;font-family:'Liberation Sans', sans-serif;transform:scaleY(1.12);transform-origin:0 9.31px;;left:145px">&lt;&lt; Description &gt;&gt;</div>
<div style="position:absolute;left:563px;top:338px;width:16px;height:42px;background:#f2f2f2;border-left:1px solid #e6e6e6"></div>
<svg style="position:absolute;left:568px;top:344px" width="9" height="5"><defs><linearGradient id="ga" x1="0" y1="0" x2="0" y2="1"><stop offset="0" stop-color="#6a6a6a"/><stop offset="1" stop-color="#b0b0b0"/></linearGradient></defs><path d="M0.5 5h8L4.5 0.5z" fill="url(#ga)"/></svg>
<svg style="position:absolute;left:568px;top:369px" width="9" height="5"><defs><linearGradient id="gb" x1="0" y1="0" x2="0" y2="1"><stop offset="0" stop-color="#6a6a6a"/><stop offset="1" stop-color="#b0b0b0"/></linearGradient></defs><path d="M0.5 0h8L4.5 4.5z" fill="url(#gb)"/></svg>
<div style="position:absolute;top:696.27px;line-height:11.5px;font-size:11.5px;color:#000;white-space:pre;font-family:'Liberation Sans', sans-serif;letter-spacing:-0.2px;left:131px">For Help, press F1</div>
<svg style="position:absolute;left:580px;top:696px" width="14" height="14"><path d="M13.5 1.5L1.5 13.5M13.5 5.5L5.5 13.5M13.5 9.5L9.5 13.5" stroke="#9c9c9c" stroke-width="1.6"/><path d="M14 3L3 14M14 7L7 14M14 11L11 14" stroke="#fff" stroke-width="1"/></svg>
<div style="position:absolute;left:141px;top:391px;width:437px;height:284px;border:1px solid #a0a0a0;box-shadow:1px 1px 0 #fff, inset 1px 1px 0 #fff"></div>
<div style="position:absolute;left:328px;top:389px;width:65px;height:5px;background:#f0f0f0"></div>
<div style="position:absolute;top:386.69px;line-height:11px;font-size:11px;color:#000;white-space:pre;font-family:'Liberation Sans', sans-serif;transform:scaleY(1.12);transform-origin:0 9.31px;;left:161px;width:400px;text-align:center">Test Results</div>
<div style="position:absolute;top:402.69px;line-height:11px;font-size:11px;color:#000;white-space:pre;font-family:'Liberation Sans', sans-serif;transform:scaleY(1.12);transform-origin:0 9.31px;;left:277px">Write</div>
<div style="position:absolute;left:310px;top:405px;width:25px;height:5px;background:#f00;border-radius:1px"></div>
<div style="position:absolute;top:402.69px;line-height:11px;font-size:11px;color:#000;white-space:pre;font-family:'Liberation Sans', sans-serif;transform:scaleY(1.12);transform-origin:0 9.31px;;left:360px">Read</div>
<div style="position:absolute;left:393px;top:405px;width:25px;height:5px;background:#008000;border-radius:1px"></div>
<div style="position:absolute;top:402.69px;line-height:11px;font-size:11px;color:#000;white-space:pre;font-family:'Liberation Sans', sans-serif;transform:scaleY(1.12);transform-origin:0 9.31px;;left:489px">Write</div>
<div style="position:absolute;top:402.69px;line-height:11px;font-size:11px;color:#000;white-space:pre;font-family:'Liberation Sans', sans-serif;transform:scaleY(1.12);transform-origin:0 9.31px;;left:537px">Read</div>
<div style="position:absolute;left:180px;top:417px;width:300px;height:224px;background:#fff"></div>
<div style="position:absolute;left:210px;top:417px;width:1px;height:224px;background:#000080"></div>
<div style="position:absolute;left:240px;top:417px;width:1px;height:224px;background:#000080"></div>
<div style="position:absolute;left:270px;top:417px;width:1px;height:224px;background:#000080"></div>
<div style="position:absolute;left:300px;top:417px;width:1px;height:224px;background:#000080"></div>
<div style="position:absolute;left:330px;top:417px;width:1px;height:224px;background:#000080"></div>
<div style="position:absolute;left:360px;top:417px;width:1px;height:224px;background:#000080"></div>
<div style="position:absolute;left:390px;top:417px;width:1px;height:224px;background:#000080"></div>
<div style="position:absolute;left:420px;top:417px;width:1px;height:224px;background:#000080"></div>
<div style="position:absolute;left:450px;top:417px;width:1px;height:224px;background:#000080"></div>
<div style="position:absolute;left:180px;top:417px;width:300px;height:1px;background:#404040"></div>
<div style="position:absolute;left:180px;top:417px;width:1px;height:224px;background:#404040"></div>
<div style="position:absolute;left:479px;top:417px;width:1px;height:224px;background:#808080"></div>
<div style="position:absolute;left:180px;top:640px;width:300px;height:1px;background:#808080"></div>
<div style="position:absolute;left:181px;top:427px;width:19px;height:5px;background:#008000"></div>
<div style="position:absolute;top:422.69px;line-height:11px;font-size:11px;color:#000;white-space:pre;font-family:'Liberation Sans', sans-serif;transform:scaleY(1.12);transform-origin:0 9.31px;;left:-223px;width:400px;text-align:right">0.5</div>
<div style="position:absolute;top:422.69px;line-height:11px;font-size:11px;color:#000;white-space:pre;font-family:'Liberation Sans', sans-serif;transform:scaleY(1.12);transform-origin:0 9.31px;;left:125px;width:400px;text-align:right">148</div>
<div style="position:absolute;top:422.69px;line-height:11px;font-size:11px;color:#000;white-space:pre;font-family:'Liberation Sans', sans-serif;transform:scaleY(1.12);transform-origin:0 9.31px;;left:173px;width:400px;text-align:right">6940</div>
<div style="position:absolute;left:181px;top:436px;width:18px;height:5px;background:#f00"></div>
<div style="position:absolute;left:181px;top:441px;width:8px;height:5px;background:#008000"></div>
<div style="position:absolute;top:436.69px;line-height:11px;font-size:11px;color:#000;white-space:pre;font-family:'Liberation Sans', sans-serif;transform:scaleY(1.12);transform-origin:0 9.31px;;left:-223px;width:400px;text-align:right">1.0</div>
<div style="position:absolute;top:436.69px;line-height:11px;font-size:11px;color:#000;white-space:pre;font-family:'Liberation Sans', sans-serif;transform:scaleY(1.12);transform-origin:0 9.31px;;left:125px;width:400px;text-align:right">6615</div>
<div style="position:absolute;top:436.69px;line-height:11px;font-size:11px;color:#000;white-space:pre;font-family:'Liberation Sans', sans-serif;transform:scaleY(1.12);transform-origin:0 9.31px;;left:173px;width:400px;text-align:right">3011</div>
<div style="position:absolute;left:181px;top:451px;width:1px;height:5px;background:#f00"></div>
<div style="position:absolute;left:181px;top:456px;width:21px;height:5px;background:#008000"></div>
<div style="position:absolute;top:451.69px;line-height:11px;font-size:11px;color:#000;white-space:pre;font-family:'Liberation Sans', sans-serif;transform:scaleY(1.12);transform-origin:0 9.31px;;left:-223px;width:400px;text-align:right">2.0</div>
<div style="position:absolute;top:451.69px;line-height:11px;font-size:11px;color:#000;white-space:pre;font-family:'Liberation Sans', sans-serif;transform:scaleY(1.12);transform-origin:0 9.31px;;left:125px;width:400px;text-align:right">886</div>
<div style="position:absolute;top:451.69px;line-height:11px;font-size:11px;color:#000;white-space:pre;font-family:'Liberation Sans', sans-serif;transform:scaleY(1.12);transform-origin:0 9.31px;;left:173px;width:400px;text-align:right">7641</div>
<div style="position:absolute;left:181px;top:465px;width:44px;height:5px;background:#f00"></div>
<div style="position:absolute;left:181px;top:470px;width:65px;height:5px;background:#008000"></div>
<div style="position:absolute;top:466.69px;line-height:11px;font-size:11px;color:#000;white-space:pre;font-family:'Liberation Sans', sans-serif;transform:scaleY(1.12);transform-origin:0 9.31px;;left:-223px;width:400px;text-align:right">4.0</div>
<div style="position:absolute;top:466.69px;line-height:11px;font-size:11px;color:#000;white-space:pre;font-family:'Liberation Sans', sans-serif;transform:scaleY(1.12);transform-origin:0 9.31px;;left:125px;width:400px;text-align:right">15207</div>
<div style="position:absolute;top:466.69px;line-height:11px;font-size:11px;color:#000;white-space:pre;font-family:'Liberation Sans', sans-serif;transform:scaleY(1.12);transform-origin:0 9.31px;;left:173px;width:400px;text-align:right">22249</div>
<div style="position:absolute;left:181px;top:480px;width:97px;height:5px;background:#f00"></div>
<div style="position:absolute;left:181px;top:485px;width:100px;height:5px;background:#008000"></div>
<div style="position:absolute;top:480.69px;line-height:11px;font-size:11px;color:#000;white-space:pre;font-family:'Liberation Sans', sans-serif;transform:scaleY(1.12);transform-origin:0 9.31px;;left:-223px;width:400px;text-align:right">8.0</div>
<div style="position:absolute;top:480.69px;line-height:11px;font-size:11px;color:#000;white-space:pre;font-family:'Liberation Sans', sans-serif;transform:scaleY(1.12);transform-origin:0 9.31px;;left:125px;width:400px;text-align:right">32686</div>
<div style="position:absolute;top:480.69px;line-height:11px;font-size:11px;color:#000;white-space:pre;font-family:'Liberation Sans', sans-serif;transform:scaleY(1.12);transform-origin:0 9.31px;;left:173px;width:400px;text-align:right">33966</div>
<div style="position:absolute;left:181px;top:494px;width:45px;height:5px;background:#f00"></div>
<div style="position:absolute;left:181px;top:499px;width:101px;height:5px;background:#008000"></div>
<div style="position:absolute;top:495.69px;line-height:11px;font-size:11px;color:#000;white-space:pre;font-family:'Liberation Sans', sans-serif;transform:scaleY(1.12);transform-origin:0 9.31px;;left:-223px;width:400px;text-align:right">16.0</div>
<div style="position:absolute;top:495.69px;line-height:11px;font-size:11px;color:#000;white-space:pre;font-family:'Liberation Sans', sans-serif;transform:scaleY(1.12);transform-origin:0 9.31px;;left:125px;width:400px;text-align:right">15566</div>
<div style="position:absolute;top:495.69px;line-height:11px;font-size:11px;color:#000;white-space:pre;font-family:'Liberation Sans', sans-serif;transform:scaleY(1.12);transform-origin:0 9.31px;;left:173px;width:400px;text-align:right">34292</div>
<div style="position:absolute;left:181px;top:509px;width:71px;height:5px;background:#f00"></div>
<div style="position:absolute;left:181px;top:514px;width:93px;height:5px;background:#008000"></div>
<div style="position:absolute;top:509.69px;line-height:11px;font-size:11px;color:#000;white-space:pre;font-family:'Liberation Sans', sans-serif;transform:scaleY(1.12);transform-origin:0 9.31px;;left:-223px;width:400px;text-align:right">32.0</div>
<div style="position:absolute;top:509.69px;line-height:11px;font-size:11px;color:#000;white-space:pre;font-family:'Liberation Sans', sans-serif;transform:scaleY(1.12);transform-origin:0 9.31px;;left:125px;width:400px;text-align:right">24153</div>
<div style="position:absolute;top:509.69px;line-height:11px;font-size:11px;color:#000;white-space:pre;font-family:'Liberation Sans', sans-serif;transform:scaleY(1.12);transform-origin:0 9.31px;;left:173px;width:400px;text-align:right">31507</div>
<div style="position:absolute;left:181px;top:524px;width:96px;height:5px;background:#f00"></div>
<div style="position:absolute;left:181px;top:529px;width:91px;height:5px;background:#008000"></div>
<div style="position:absolute;top:524.69px;line-height:11px;font-size:11px;color:#000;white-space:pre;font-family:'Liberation Sans', sans-serif;transform:scaleY(1.12);transform-origin:0 9.31px;;left:-223px;width:400px;text-align:right">64.0</div>
<div style="position:absolute;top:524.69px;line-height:11px;font-size:11px;color:#000;white-space:pre;font-family:'Liberation Sans', sans-serif;transform:scaleY(1.12);transform-origin:0 9.31px;;left:125px;width:400px;text-align:right">32443</div>
<div style="position:absolute;top:524.69px;line-height:11px;font-size:11px;color:#000;white-space:pre;font-family:'Liberation Sans', sans-serif;transform:scaleY(1.12);transform-origin:0 9.31px;;left:173px;width:400px;text-align:right">30986</div>
<div style="position:absolute;left:181px;top:538px;width:82px;height:5px;background:#f00"></div>
<div style="position:absolute;left:181px;top:543px;width:91px;height:5px;background:#008000"></div>
<div style="position:absolute;top:539.69px;line-height:11px;font-size:11px;color:#000;white-space:pre;font-family:'Liberation Sans', sans-serif;transform:scaleY(1.12);transform-origin:0 9.31px;;left:-223px;width:400px;text-align:right">128.0</div>
<div style="position:absolute;top:539.69px;line-height:11px;font-size:11px;color:#000;white-space:pre;font-family:'Liberation Sans', sans-serif;transform:scaleY(1.12);transform-origin:0 9.31px;;left:125px;width:400px;text-align:right">27828</div>
<div style="position:absolute;top:539.69px;line-height:11px;font-size:11px;color:#000;white-space:pre;font-family:'Liberation Sans', sans-serif;transform:scaleY(1.12);transform-origin:0 9.31px;;left:173px;width:400px;text-align:right">30732</div>
<div style="position:absolute;left:181px;top:553px;width:117px;height:5px;background:#f00"></div>
<div style="position:absolute;left:181px;top:558px;width:121px;height:5px;background:#008000"></div>
<div style="position:absolute;top:553.69px;line-height:11px;font-size:11px;color:#000;white-space:pre;font-family:'Liberation Sans', sans-serif;transform:scaleY(1.12);transform-origin:0 9.31px;;left:-223px;width:400px;text-align:right">256.0</div>
<div style="position:absolute;top:553.69px;line-height:11px;font-size:11px;color:#000;white-space:pre;font-family:'Liberation Sans', sans-serif;transform:scaleY(1.12);transform-origin:0 9.31px;;left:125px;width:400px;text-align:right">39598</div>
<div style="position:absolute;top:553.69px;line-height:11px;font-size:11px;color:#000;white-space:pre;font-family:'Liberation Sans', sans-serif;transform:scaleY(1.12);transform-origin:0 9.31px;;left:173px;width:400px;text-align:right">40768</div>
<div style="position:absolute;left:181px;top:567px;width:106px;height:5px;background:#f00"></div>
<div style="position:absolute;left:181px;top:572px;width:145px;height:5px;background:#008000"></div>
<div style="position:absolute;top:568.69px;line-height:11px;font-size:11px;color:#000;white-space:pre;font-family:'Liberation Sans', sans-serif;transform:scaleY(1.12);transform-origin:0 9.31px;;left:-223px;width:400px;text-align:right">512.0</div>
<div style="position:absolute;top:568.69px;line-height:11px;font-size:11px;color:#000;white-space:pre;font-family:'Liberation Sans', sans-serif;transform:scaleY(1.12);transform-origin:0 9.31px;;left:125px;width:400px;text-align:right">35839</div>
<div style="position:absolute;top:568.69px;line-height:11px;font-size:11px;color:#000;white-space:pre;font-family:'Liberation Sans', sans-serif;transform:scaleY(1.12);transform-origin:0 9.31px;;left:173px;width:400px;text-align:right">48717</div>
<div style="position:absolute;left:181px;top:582px;width:146px;height:5px;background:#f00"></div>
<div style="position:absolute;left:181px;top:587px;width:174px;height:5px;background:#008000"></div>
<div style="position:absolute;top:583.69px;line-height:11px;font-size:11px;color:#000;white-space:pre;font-family:'Liberation Sans', sans-serif;transform:scaleY(1.12);transform-origin:0 9.31px;;left:-223px;width:400px;text-align:right">1024.0</div>
<div style="position:absolute;top:583.69px;line-height:11px;font-size:11px;color:#000;white-space:pre;font-family:'Liberation Sans', sans-serif;transform:scaleY(1.12);transform-origin:0 9.31px;;left:125px;width:400px;text-align:right">49074</div>
<div style="position:absolute;top:583.69px;line-height:11px;font-size:11px;color:#000;white-space:pre;font-family:'Liberation Sans', sans-serif;transform:scaleY(1.12);transform-origin:0 9.31px;;left:173px;width:400px;text-align:right">58482</div>
<div style="position:absolute;left:181px;top:596px;width:199px;height:5px;background:#f00"></div>
<div style="position:absolute;left:181px;top:601px;width:198px;height:5px;background:#008000"></div>
<div style="position:absolute;top:597.69px;line-height:11px;font-size:11px;color:#000;white-space:pre;font-family:'Liberation Sans', sans-serif;transform:scaleY(1.12);transform-origin:0 9.31px;;left:-223px;width:400px;text-align:right">2048.0</div>
<div style="position:absolute;top:597.69px;line-height:11px;font-size:11px;color:#000;white-space:pre;font-family:'Liberation Sans', sans-serif;transform:scaleY(1.12);transform-origin:0 9.31px;;left:125px;width:400px;text-align:right">66692</div>
<div style="position:absolute;top:597.69px;line-height:11px;font-size:11px;color:#000;white-space:pre;font-family:'Liberation Sans', sans-serif;transform:scaleY(1.12);transform-origin:0 9.31px;;left:173px;width:400px;text-align:right">66362</div>
<div style="position:absolute;left:181px;top:611px;width:199px;height:5px;background:#f00"></div>
<div style="position:absolute;left:181px;top:616px;width:203px;height:5px;background:#008000"></div>
<div style="position:absolute;top:612.69px;line-height:11px;font-size:11px;color:#000;white-space:pre;font-family:'Liberation Sans', sans-serif;transform:scaleY(1.12);transform-origin:0 9.31px;;left:-223px;width:400px;text-align:right">4096.0</div>
<div style="position:absolute;top:612.69px;line-height:11px;font-size:11px;color:#000;white-space:pre;font-family:'Liberation Sans', sans-serif;transform:scaleY(1.12);transform-origin:0 9.31px;;left:125px;width:400px;text-align:right">66774</div>
<div style="position:absolute;top:612.69px;line-height:11px;font-size:11px;color:#000;white-space:pre;font-family:'Liberation Sans', sans-serif;transform:scaleY(1.12);transform-origin:0 9.31px;;left:173px;width:400px;text-align:right">68304</div>
<div style="position:absolute;left:181px;top:626px;width:189px;height:5px;background:#f00"></div>
<div style="position:absolute;left:181px;top:631px;width:196px;height:5px;background:#008000"></div>
<div style="position:absolute;top:626.69px;line-height:11px;font-size:11px;color:#000;white-space:pre;font-family:'Liberation Sans', sans-serif;transform:scaleY(1.12);transform-origin:0 9.31px;;left:-223px;width:400px;text-align:right">8192.0</div>
<div style="position:absolute;top:626.69px;line-height:11px;font-size:11px;color:#000;white-space:pre;font-family:'Liberation Sans', sans-serif;transform:scaleY(1.12);transform-origin:0 9.31px;;left:125px;width:400px;text-align:right">63610</div>
<div style="position:absolute;top:626.69px;line-height:11px;font-size:11px;color:#000;white-space:pre;font-family:'Liberation Sans', sans-serif;transform:scaleY(1.12);transform-origin:0 9.31px;;left:173px;width:400px;text-align:right">65873</div>
<div style="position:absolute;top:649.69px;line-height:11px;font-size:11px;color:#000;white-space:pre;font-family:'Liberation Sans', sans-serif;transform:scaleY(1.12);transform-origin:0 9.31px;;left:-20px;width:400px;text-align:center">0</div>
<div style="position:absolute;top:649.69px;line-height:11px;font-size:11px;color:#000;white-space:pre;font-family:'Liberation Sans', sans-serif;transform:scaleY(1.12);transform-origin:0 9.31px;;left:10px;width:400px;text-align:center">10</div>
<div style="position:absolute;top:649.69px;line-height:11px;font-size:11px;color:#000;white-space:pre;font-family:'Liberation Sans', sans-serif;transform:scaleY(1.12);transform-origin:0 9.31px;;left:40px;width:400px;text-align:center">20</div>
<div style="position:absolute;top:649.69px;line-height:11px;font-size:11px;color:#000;white-space:pre;font-family:'Liberation Sans', sans-serif;transform:scaleY(1.12);transform-origin:0 9.31px;;left:70px;width:400px;text-align:center">30</div>
<div style="position:absolute;top:649.69px;line-height:11px;font-size:11px;color:#000;white-space:pre;font-family:'Liberation Sans', sans-serif;transform:scaleY(1.12);transform-origin:0 9.31px;;left:100px;width:400px;text-align:center">40</div>
<div style="position:absolute;top:649.69px;line-height:11px;font-size:11px;color:#000;white-space:pre;font-family:'Liberation Sans', sans-serif;transform:scaleY(1.12);transform-origin:0 9.31px;;left:130px;width:400px;text-align:center">50</div>
<div style="position:absolute;top:649.69px;line-height:11px;font-size:11px;color:#000;white-space:pre;font-family:'Liberation Sans', sans-serif;transform:scaleY(1.12);transform-origin:0 9.31px;;left:160px;width:400px;text-align:center">60</div>
<div style="position:absolute;top:649.69px;line-height:11px;font-size:11px;color:#000;white-space:pre;font-family:'Liberation Sans', sans-serif;transform:scaleY(1.12);transform-origin:0 9.31px;;left:190px;width:400px;text-align:center">70</div>
<div style="position:absolute;top:649.69px;line-height:11px;font-size:11px;color:#000;white-space:pre;font-family:'Liberation Sans', sans-serif;transform:scaleY(1.12);transform-origin:0 9.31px;;left:220px;width:400px;text-align:center">80</div>
<div style="position:absolute;top:649.69px;line-height:11px;font-size:11px;color:#000;white-space:pre;font-family:'Liberation Sans', sans-serif;transform:scaleY(1.12);transform-origin:0 9.31px;;left:250px;width:400px;text-align:center">90</div>
<div style="position:absolute;top:649.69px;line-height:11px;font-size:11px;color:#000;white-space:pre;font-family:'Liberation Sans', sans-serif;transform:scaleY(1.12);transform-origin:0 9.31px;;left:280px;width:400px;text-align:center">100</div>
<div style="position:absolute;top:662.69px;line-height:11px;font-size:11px;color:#000;white-space:pre;font-family:'Liberation Sans', sans-serif;transform:scaleY(1.12);transform-origin:0 9.31px;;left:125px;width:400px;text-align:center">Transfer Rate - MB / Sec</div>
<div style="position:absolute;left:743px;top:298px;width:60px;height:502px;border:1px solid #b0b3b6;border-radius:7px 0 0 5px;background:#0e1114;overflow:hidden">
<div style="position:absolute;left:0;top:0;width:60px;height:28px;background:linear-gradient(90deg,#3a3c3f,#45474a 60%,#606266)"></div>
<div style="position:absolute;left:0;top:28px;width:5px;height:115px;background:linear-gradient(180deg,#3a3c3f 0%,#45484b 45%,#85888b 82%,#b0b3b6 100%)"></div>
</div>
<svg style="position:absolute;left:750px;top:309px" width="16" height="10"><path d="M0 6L6 1H15L13 5z" fill="#dcdcdc"/><path d="M0 6H13L15 2V5L13 9H0z" fill="#f0f0f0"/></svg>
<div style="position:absolute;top:305.84px;line-height:12px;font-size:12px;color:#0a0a20;white-space:pre;font-family:'Liberation Sans', sans-serif;;left:772px">S</div>
<div style="position:absolute;left:748px;top:325px;width:40px;height:1px;background:#c0c3c6"></div>
<div style="position:absolute;left:748px;top:325px;width:1px;height:471px;background:#c0c3c6"></div>
<div style="position:absolute;left:749px;top:326px;width:40px;height:1px;background:#1a1d20"></div>
<div style="position:absolute;left:749px;top:326px;width:1px;height:469px;background:#1a1d20"></div>
<div style="position:absolute;left:748px;top:795px;width:40px;height:1px;background:#c0c3c6"></div>
<div style="position:absolute;left:750px;top:327px;width:30px;height:468px;background:#f0f0f0"></div>
<div style="position:absolute;left:758px;top:336px;width:20px;height:17px;background:linear-gradient(180deg,#f6f6f6 0%,#ececec 40%,#d6d6d6 75%,#dcdcdc 100%);border:1px solid #777;border-right:none;border-bottom:none"></div>
<div style="position:absolute;left:758px;top:354px;width:20px;height:17px;background:linear-gradient(180deg,#f6f6f6 0%,#ececec 40%,#d6d6d6 75%,#dcdcdc 100%);border:1px solid #777;border-right:none;border-bottom:none"></div>
<div style="position:absolute;left:756px;top:372px;width:30px;height:383px;background:#fff;border-left:1px solid #8a8a8a;border-bottom:1px solid #8a8a8a;border-top:1px solid #777"></div>
<div style="position:absolute;left:771px;top:390px;width:1px;height:300px;background:#e6e6e6"></div>
<div style="position:absolute;left:774px;top:322px;width:10px;height:214px;background:linear-gradient(90deg,#e8ecf0,#f8fafc);border-left:1px solid #8a8a8a;border-bottom:1px solid #8a8a8a;border-radius:0 0 0 4px"></div>
<div style="position:absolute;left:771px;top:585px;width:10px;height:105px;border:1px solid #e0e0e0;border-radius:3px"></div>
</body></html>
